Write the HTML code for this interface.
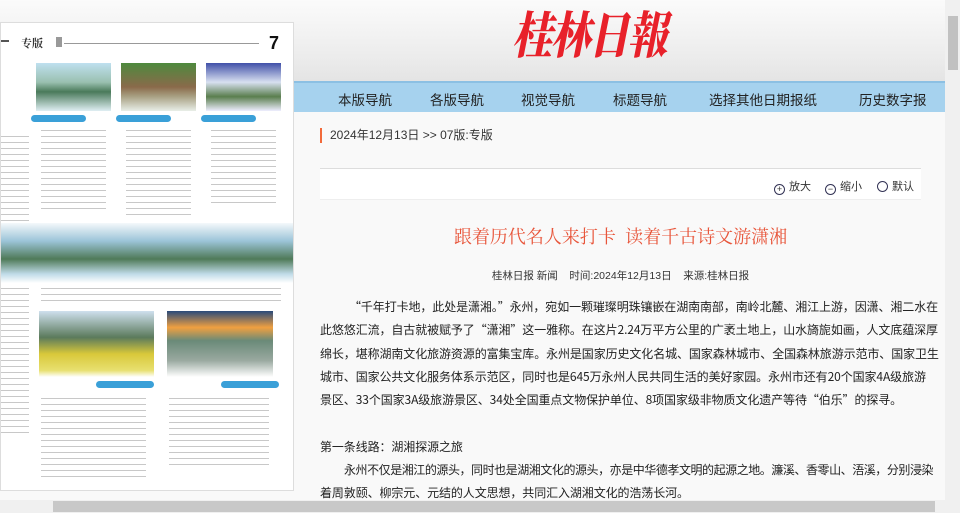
<!DOCTYPE html>
<html><head><meta charset="utf-8"><style>
*{margin:0;padding:0;box-sizing:border-box}
body{width:960px;height:513px;overflow:hidden;background:#f9f9f9;font-family:"Liberation Sans","Noto Sans CJK SC",sans-serif;position:relative;color:#222}
.hdr{position:absolute;left:0;top:0;width:945px;height:81px;background:linear-gradient(#fbfbfb,#ececec 70%,#e4e4e4)}
.logo{position:absolute;left:512px;top:2px;font-family:"Noto Serif CJK SC",serif;font-weight:900;font-size:50px;line-height:60px;color:#e8212a;letter-spacing:-2px;font-style:italic;transform:scaleX(0.8);transform-origin:left}
.nav{position:absolute;left:0;top:81px;width:945px;height:31px;background:#a6d2ee;border-top:2px solid #8cc0e3}
.nav span{position:absolute;top:6px;font-size:13.5px;color:#222;white-space:nowrap}
.crumb{position:absolute;left:320px;top:128px;border-left:2px solid #f26a3a;padding-left:8px;font-size:12px;color:#333;height:15px;line-height:15px;white-space:nowrap}
.tools{position:absolute;left:320px;top:168px;width:601px;height:32px;background:#fff;border-top:1px solid #ddd;border-bottom:1px solid #eee;font-size:11px;color:#333}
.tools span{position:absolute;top:9px;white-space:nowrap}
.circ{display:inline-block;width:11px;height:11px;border:1px solid #335;border-radius:50%;vertical-align:-2px;margin-right:4px;text-align:center;font-size:9px;line-height:9px;font-style:normal}
h1{position:absolute;left:320px;width:601px;top:223px;text-align:center;font-size:18px;font-weight:normal;color:#e8553a;font-family:"Noto Serif CJK SC","Noto Sans CJK SC",serif;white-space:nowrap}
.meta{position:absolute;left:320px;width:601px;top:268px;text-align:center;font-size:10.5px;color:#333;white-space:nowrap}
.art{position:absolute;left:320px;top:295px;width:620px;font-size:12px;line-height:23.3px;color:#222;font-family:"Noto Sans CJK SC",sans-serif;white-space:nowrap;letter-spacing:-0.1px}
.art .i{padding-left:29px}
.pic{position:absolute;left:0;top:22px;width:294px;height:469px;background:#fff;border:1px solid #ddd;overflow:hidden}
.b{position:absolute}
.txt{background:repeating-linear-gradient(#fff 0 3px,#c8c8c8 3px 4px,#fff 4px 6px)}
.vs{position:absolute;left:945px;top:0;width:15px;height:500px;background:#f0f0f0}
.hs{position:absolute;left:0;top:500px;width:960px;height:13px;background:#f0f0f0}
</style></head><body>
<div class="hdr"><div class="logo">桂林日報</div></div>
<div class="nav">
<span style="left:338px">本版导航</span><span style="left:430px">各版导航</span><span style="left:521px">视觉导航</span><span style="left:613px">标题导航</span><span style="left:709px">选择其他日期报纸</span><span style="left:859px">历史数字报</span>
</div>
<div class="crumb">2024年12月13日 &gt;&gt; 07版:专版</div>
<div class="tools">
<span style="left:454px"><i class="circ">+</i>放大</span>
<span style="left:505px"><i class="circ">−</i>缩小</span>
<span style="left:557px"><i class="circ"></i>默认</span>
</div>
<h1>跟着历代名人来打卡&nbsp;&nbsp;读着千古诗文游潇湘</h1>
<div class="meta">桂林日报&nbsp;新闻 &nbsp;&nbsp; 时间:2024年12月13日 &nbsp;&nbsp; 来源:桂林日报</div>
<div class="art">
<div class="i">“千年打卡地，此处是潇湘。”永州，宛如一颗璀璨明珠镶嵌在湖南南部，南岭北麓、湘江上游，因潇、湘二水在</div>
<div>此悠悠汇流，自古就被赋予了“潇湘”这一雅称。在这片2.24万平方公里的广袤土地上，山水旖旎如画，人文底蕴深厚</div>
<div>绵长，堪称湖南文化旅游资源的富集宝库。永州是国家历史文化名城、国家森林城市、全国森林旅游示范市、国家卫生</div>
<div>城市、国家公共文化服务体系示范区，同时也是645万永州人民共同生活的美好家园。永州市还有20个国家4A级旅游</div>
<div>景区、33个国家3A级旅游景区、34处全国重点文物保护单位、8项国家级非物质文化遗产等待“伯乐”的探寻。</div>
<div style="height:23.3px"></div>
<div>第一条线路：湖湘探源之旅</div>
<div class="i" style="padding-left:24px;letter-spacing:-0.45px">永州不仅是湘江的源头，同时也是湖湘文化的源头，亦是中华德孝文明的起源之地。濂溪、香零山、浯溪，分别浸染</div>
<div>着周敦颐、柳宗元、元结的人文思想，共同汇入湖湘文化的浩荡长河。</div>
</div>
<div class="pic">
<div class="b" style="left:0;top:17px;width:8px;height:2px;background:#555"></div>
<div class="b" style="left:20px;top:12px;font-size:11px;font-family:'Noto Serif CJK SC',serif;font-weight:bold;color:#333">专版</div>
<div class="b" style="left:55px;top:14px;width:6px;height:10px;background:#999"></div>
<div class="b" style="left:63px;top:20px;width:195px;height:1px;background:#999"></div>
<div class="b" style="left:268px;top:10px;font-size:18px;font-weight:900;color:#111">7</div>
<div class="b" style="left:35px;top:40px;width:75px;height:48px;background:linear-gradient(#bfe0ef,#9ac0b0 40%,#4a7a5a 60%,#dfeef3)"></div>
<div class="b" style="left:120px;top:40px;width:75px;height:48px;background:linear-gradient(#4e8a3e,#8a6a4a 50%,#a9a184 70%,#e8eee8)"></div>
<div class="b" style="left:205px;top:40px;width:75px;height:48px;background:linear-gradient(#4050a8,#d8e0f0 40%,#5a7e4e 70%,#eef)"></div>
<div class="b" style="left:30px;top:92px;width:55px;height:7px;background:#3aa0d8;border-radius:4px"></div>
<div class="b" style="left:115px;top:92px;width:55px;height:7px;background:#3aa0d8;border-radius:4px"></div>
<div class="b" style="left:200px;top:92px;width:55px;height:7px;background:#3aa0d8;border-radius:4px"></div>
<div class="b txt" style="left:40px;top:104px;width:65px;height:86px"></div>
<div class="b txt" style="left:125px;top:104px;width:65px;height:92px"></div>
<div class="b txt" style="left:210px;top:104px;width:65px;height:76px"></div>
<div class="b txt" style="left:0;top:110px;width:28px;height:100px"></div>
<div class="b" style="left:0;top:200px;width:294px;height:60px;background:linear-gradient(#f4f8fb,#9cc4d8 30%,#4f7a58 60%,#c0dbe8 85%,#fff)"></div>
<div class="b txt" style="left:0;top:262px;width:28px;height:150px"></div>
<div class="b txt" style="left:40px;top:262px;width:240px;height:20px"></div>
<div class="b" style="left:38px;top:288px;width:115px;height:66px;background:linear-gradient(#cfe0ee,#5b7a5c 40%,#d8c83a 65%,#e8e070 90%,#fff)"></div>
<div class="b" style="left:166px;top:288px;width:106px;height:66px;background:linear-gradient(#2a4a7a,#f0a040 25%,#6a8a78 45%,#9aa9a0 75%,#fff)"></div>
<div class="b" style="left:95px;top:358px;width:58px;height:7px;background:#3aa0d8;border-radius:4px"></div>
<div class="b" style="left:220px;top:358px;width:58px;height:7px;background:#3aa0d8;border-radius:4px"></div>
<div class="b txt" style="left:40px;top:372px;width:105px;height:85px"></div>
<div class="b txt" style="left:168px;top:372px;width:100px;height:70px"></div>
</div>
<div class="vs"><div style="position:absolute;left:3px;top:16px;width:10px;height:54px;background:#c1c1c1"></div></div>
<div class="hs"><div style="position:absolute;left:53px;top:1px;width:882px;height:11px;background:#c8c8c8"></div></div>
</body></html>
